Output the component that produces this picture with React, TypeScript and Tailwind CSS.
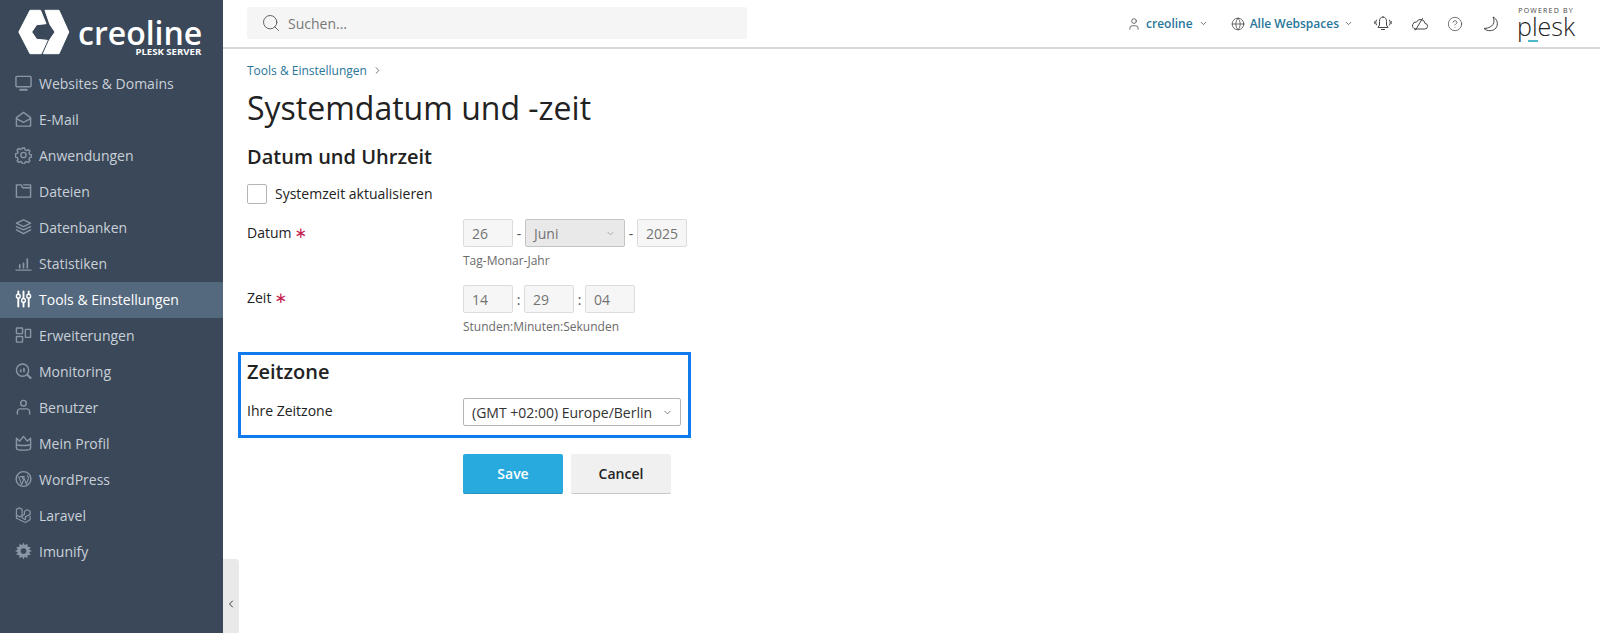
import React from "react";
import { ChevronDown, ChevronLeft, ChevronRight, Search, User, Globe, CircleHelp } from "lucide-react";

const Font = '[font-family:"Open_Sans",sans-serif]';

const I = ({ children }: { children: React.ReactNode }) => (
  <svg width="17" height="18" viewBox="0 0 18 18" fill="none" stroke="currentColor" strokeWidth="1.5" strokeLinecap="round" strokeLinejoin="round">
    {children}
  </svg>
);

const icons: Record<string, React.ReactNode> = {
  monitor: <I><rect x="1" y="2" width="16" height="11" rx="1" /><path d="M5.500 16.200h7" strokeWidth="2.200" /></I>,
  mail: <I><path d="M1.500 7.500 9 2l7.500 5.500V16.500h-15z" /><path d="M1.500 8.500 9 12.500l7.500-4" /></I>,
  gear: <I><circle cx="9" cy="9" r="2.800" /><path d="M7.800 1.500h2.400l.4 2 1.700.8 1.800-1 1.700 1.700-1 1.800.7 1.700 2 .4v2.400l-2 .4-.7 1.700 1 1.800-1.700 1.700-1.800-1-1.700.7-.4 2H7.800l-.4-2-1.700-.7-1.800 1-1.700-1.700 1-1.800-.7-1.700-2-.4V7.700l2-.4.7-1.700-1-1.800 1.700-1.700 1.800 1 1.700-.8z" /></I>,
  folder: <I><path d="M1.500 2.500h5l1.500 3h8.500v10h-15z" /><path d="M9 2.500h7.500v3" /></I>,
  layers: <I><path d="M9 1.500 16.500 5 9 8.500 1.500 5z" /><path d="M1.500 8.500 9 12l7.500-3.500" /><path d="M1.500 12 9 16l7.500-4" /></I>,
  stats: <I><path d="M1 16.500h16" /><path d="M5 14v-3" strokeWidth="1.800" /><path d="M9 14V9.500" strokeWidth="1.800" /><path d="M13 14V5" strokeWidth="1.800" /></I>,
  tools: <I><path d="M3.500 1v2.500M3.500 9v8M9 1v7M9 13v4M14.500 1v2M14.500 9v8" strokeWidth="2" /><circle cx="3.500" cy="6" r="2" /><circle cx="9" cy="10.500" r="2" /><circle cx="14.500" cy="6" r="2" /></I>,
  ext: <I><rect x="1.500" y="1.500" width="6.500" height="6" rx=".5" /><rect x="1.500" y="10.500" width="6.500" height="6" rx=".5" /><rect x="11" y="3" width="5.500" height="8.500" rx=".5" /></I>,
  mon: <I><circle cx="8" cy="8" r="6.500" /><path d="m13 13 3.500 3.500" strokeWidth="2.200" /><path d="M6 9.500V8M9.500 9.500V6.500" strokeWidth="1.800" /></I>,
  user: <I><circle cx="9" cy="5" r="3" /><path d="M2.500 16.500V14c0-1.500 1.500-3 3-3h7c1.500 0 3 1.500 3 3v2.500" /></I>,
  crown: <I><path d="M1.500 4 5 7 9 2l4 5 3.500-3v10.500c0 1.500-3 2-7.500 2s-7.500-.5-7.500-2z" /><path d="M1.500 10.500c2 1.500 13 1.500 15 0" /></I>,
  wp: <I><circle cx="9" cy="9" r="7.800" /><path d="M4 6.500 7 15l2-5-1.500-3.500M5.800 6.500h4M9 6.500l3 8 2-5.500c.5-1.500 0-2.500-1-3.500" strokeWidth="1.200" /></I>,
  laravel: <I><path d="M1.500 3 4.500 1.500 7.500 3v9l3.500 2v-3l5-2.500V5l-3-1.500L10 5v3.500l-5 2.500-3.500-2zM1.500 9v3.500L11 17l5-3v-3.500" strokeWidth="1.300" /></I>,
  imunify: (
    <svg width="17" height="18" viewBox="0 0 18 18">
      <path fill="currentColor" fillRule="evenodd" d="M9 0l1.400 3 2.700-1.700.4 3.200 3.200.4L15 7.600 18 9l-3 1.400 1.700 2.700-3.200.4-.4 3.200-2.700-1.700L9 18l-1.400-3-2.700 1.700-.4-3.200-3.200-.4L3 10.400 0 9l3-1.400L1.300 4.900l3.200-.4.400-3.200L7.600 3zM9 6a3 3 0 1 0 0 6 3 3 0 0 0 0-6z" />
    </svg>
  ),
};

const nav: [string, string][] = [
  ["monitor", "Websites & Domains"],
  ["mail", "E-Mail"],
  ["gear", "Anwendungen"],
  ["folder", "Dateien"],
  ["layers", "Datenbanken"],
  ["stats", "Statistiken"],
  ["tools", "Tools & Einstellungen"],
  ["ext", "Erweiterungen"],
  ["mon", "Monitoring"],
  ["user", "Benutzer"],
  ["crown", "Mein Profil"],
  ["wp", "WordPress"],
  ["laravel", "Laravel"],
  ["imunify", "Imunify"],
];

function Box({ v }: { v: string }) {
  return (
    <div className="w-[50px] h-[28px] border border-[#dcdcdc] bg-[#f6f6f6] rounded-[2px] px-[8px] flex items-center text-[14px] text-[#737373]">
      {v}
    </div>
  );
}

function Star() {
  return <span className="ml-[3px] text-[#c4254f] text-[15px] [font-family:'DejaVu_Sans',sans-serif]">∗</span>;
}

export default function App() {
  return (
    <div className={`flex h-[633px] w-[1600px] overflow-hidden bg-white ${Font} text-[#222]`}>
      <aside className="w-[223px] shrink-0 bg-[#3a4859] text-[#c9d0d8]">
        <div className="h-[66px] flex items-start pl-[18px] pt-[9px]">
          <svg width="52" height="46" viewBox="0 0 52 46" className="shrink-0">
            <path d="M12 1.300h10.500l5.500 13.400-9.300 1-5 7.300 5 7.300 10.600 1-6.100 13.400H12L.8 23z" fill="#fff" stroke="#fff" strokeWidth="1" strokeLinejoin="round" />
            <path d="M27 1.300H41L50.800 23 41 44.700H25.300l6-13.400L37 23l-5-7.300z" fill="#fff" stroke="#fff" strokeWidth="1" strokeLinejoin="round" />
          </svg>
          <div className="ml-[8px] mt-[9px] flex flex-col items-end">
            <span className="text-[32px] leading-[30px] font-semibold text-white">creoline</span>
            <span className="text-[9.600px] leading-[9px] font-bold text-white -mt-[1px] mr-[1px]">PLESK SERVER</span>
          </div>
        </div>
        <nav>
          {nav.map(([ic, label]) => {
            const active = label.startsWith("Tools");
            return (
              <div
                key={label}
                className={`h-[36px] flex items-center pl-[15px] pb-[2px] gap-[7px] text-[14px] ${active ? "bg-[#54697e] text-white" : ""}`}
              >
                <span className={active ? "text-white" : "text-[#8a96a3]"}>{icons[ic]}</span>
                <span>{label}</span>
              </div>
            );
          })}
        </nav>
      </aside>

      <div className="relative flex-1 flex flex-col min-w-0">
        <header className="h-[49px] shrink-0 border-b-2 border-[#d8d8d8] flex items-center pl-[24px] pr-[25px]">
          <div className="w-[500px] h-[32px] -mt-[1px] bg-[#f5f5f5] rounded-[3px] flex items-center pl-[14px] gap-[7px] text-[14px] text-[#777]">
            <Search size={20} strokeWidth={1.1} className="text-[#555]" />
            <span>Suchen...</span>
          </div>
          <div className="flex-1" />
          <div className="flex items-center text-[12px] font-semibold text-[#28769a]">
            <User size={14} strokeWidth={1.3} className="text-[#444] mr-[5px]" />
            <span>creoline</span>
            <ChevronDown size={9} strokeWidth={2} className="text-[#444] ml-[6px]" />
            <Globe size={14} strokeWidth={1.3} className="text-[#444] ml-[23px] mr-[5px]" />
            <span>Alle Webspaces</span>
            <ChevronDown size={9} strokeWidth={2} className="text-[#444] ml-[5px]" />
            <svg width="18" height="17" viewBox="0 0 18 16" fill="none" stroke="#444" strokeWidth="1" strokeLinecap="round" strokeLinejoin="round" className="ml-[21px]">
              <path d="M9 1.500c-2.500 0-3.500 2-3.500 4.500v3.500L4 12h10l-1.500-2.500V6c0-2.500-1-4.500-3.500-4.500zM7.500 14h3" />
              <path d="M2.500 4.500c-1 1.500-1 3.500 0 5M.8 6v2M15.500 4.500c1 1.500 1 3.500 0 5M17.200 6v2" />
            </svg>
            <svg width="17" height="14" viewBox="0 0 17 14" fill="none" stroke="#444" strokeWidth="1" strokeLinecap="round" strokeLinejoin="round" className="ml-[19px]">
              <path d="M4 12h9.500a2.800 2.800 0 0 0 .5-5.600A4.500 4.500 0 0 0 5.500 5 3.600 3.600 0 0 0 4 12z" />
              <path d="M4.500 13 11.500 1.500" />
            </svg>
            <CircleHelp size={16} strokeWidth={1.1} className="text-[#444] ml-[19px]" />
            <svg width="16" height="16" viewBox="0 0 16 16" fill="none" stroke="#333" strokeWidth=".9" strokeLinejoin="round" className="ml-[20px]">
              <path d="M10 1c2.500 5 .5 11-9 11.500 3 3 9 3 12-.5 2.500-3.500 1.500-9-3-11z" />
            </svg>
          </div>
          <div className="ml-[18px] w-[58px] self-start pt-[8px] flex flex-col items-center">
            <span className="text-[7px] leading-[5px] h-[5px] tracking-[1.2px] whitespace-nowrap text-[#444]">POWERED BY</span>
            <span className="relative mt-[3px] text-[25px] font-light leading-[20px] text-[#222]">
              plesk
              <span className="absolute left-[11px] bottom-[-6px] w-[10px] h-[2px] bg-[#4fb9cc]" />
            </span>
          </div>
        </header>

        <main className="pl-[24px] pt-[13px]">
          <div className="flex items-center text-[12px] leading-[17px] text-[#28769a]">
            Tools &amp; Einstellungen
            <ChevronRight size={11} className="text-[#666] ml-[5px]" />
          </div>
          <h1 className="text-[32px] leading-[44px] mt-[7px] text-[#222]">Systemdatum und -zeit</h1>
          <h2 className="text-[20px] leading-[28px] font-semibold mt-[13px] text-[#222]">Datum und Uhrzeit</h2>

          <label className="flex items-center mt-[13px] text-[14px] h-[20px]">
            <span className="w-[20px] h-[20px] border border-[#b5b5b5] rounded-[2px] bg-white" />
            <span className="ml-[8px] mb-[2px]">Systemzeit aktualisieren</span>
          </label>

          <div className="flex mt-[15px]">
            <div className="w-[216px] pt-[2px] text-[14px] leading-[24px] flex items-center self-start">
              Datum <Star />
            </div>
            <div>
              <div className="flex items-center">
                <Box v="26" />
                <span className="w-[12px] text-center text-[14px] text-[#555]">-</span>
                <div className="w-[100px] h-[28px] border border-[#c4c4c4] bg-[#e9e9e9] rounded-[2px] pl-[8px] pr-[8px] flex items-center justify-between text-[14px] text-[#737373]">
                  Juni
                  <ChevronDown size={11} className="text-[#aaa]" />
                </div>
                <span className="w-[12px] text-center text-[14px] text-[#555]">-</span>
                <Box v="2025" />
              </div>
              <div className="text-[12px] leading-[17px] mt-[5px] text-[#6b6b6b]">Tag-Monar-Jahr</div>
            </div>
          </div>

          <div className="flex mt-[16px]">
            <div className="w-[216px] pt-[1px] text-[14px] leading-[24px] flex items-center self-start">
              Zeit <Star />
            </div>
            <div>
              <div className="flex items-center">
                <Box v="14" />
                <span className="w-[11px] text-center text-[14px] text-[#555]">:</span>
                <Box v="29" />
                <span className="w-[11px] text-center text-[14px] text-[#555]">:</span>
                <Box v="04" />
              </div>
              <div className="text-[12px] leading-[17px] mt-[5px] text-[#6b6b6b]">Stunden:Minuten:Sekunden</div>
            </div>
          </div>

          <div className="-ml-[9px] mt-[17px] w-[453px] h-[86px] border-[3px] border-[#0f7bef] pl-[6px] pt-[3px]">
            <h2 className="text-[20px] leading-[28px] font-semibold text-[#222]">Zeitzone</h2>
            <div className="flex items-center mt-[12px]">
              <div className="w-[216px] text-[14px] mb-[4px]">Ihre Zeitzone</div>
              <div className="w-[218px] h-[28px] border border-[#b5b5b5] rounded-[2px] pl-[8px] pr-[7px] flex items-center justify-between text-[14px] text-[#333]">
                (GMT +02:00) Europe/Berlin
                <ChevronDown size={11} className="text-[#777]" />
              </div>
            </div>
          </div>

          <div className="flex ml-[216px] mt-[16px] gap-[8px] text-[14px] font-semibold">
            <button className="w-[100px] h-[40px] bg-[#28aade] text-white rounded-[2px] border-b border-[#2593c0]">Save</button>
            <button className="w-[100px] h-[40px] bg-[#f0f0f0] text-[#222] rounded-[2px] border-b border-[#c8c8c8]">Cancel</button>
          </div>
        </main>

        <div className="absolute left-0 top-[559px] w-[16px] h-[74px] bg-[#e9e9e9] rounded-tr-[4px] flex items-center justify-center">
          <ChevronLeft size={12} strokeWidth={1.8} className="text-[#222] mt-[15px]" />
        </div>
      </div>
    </div>
  );
}
